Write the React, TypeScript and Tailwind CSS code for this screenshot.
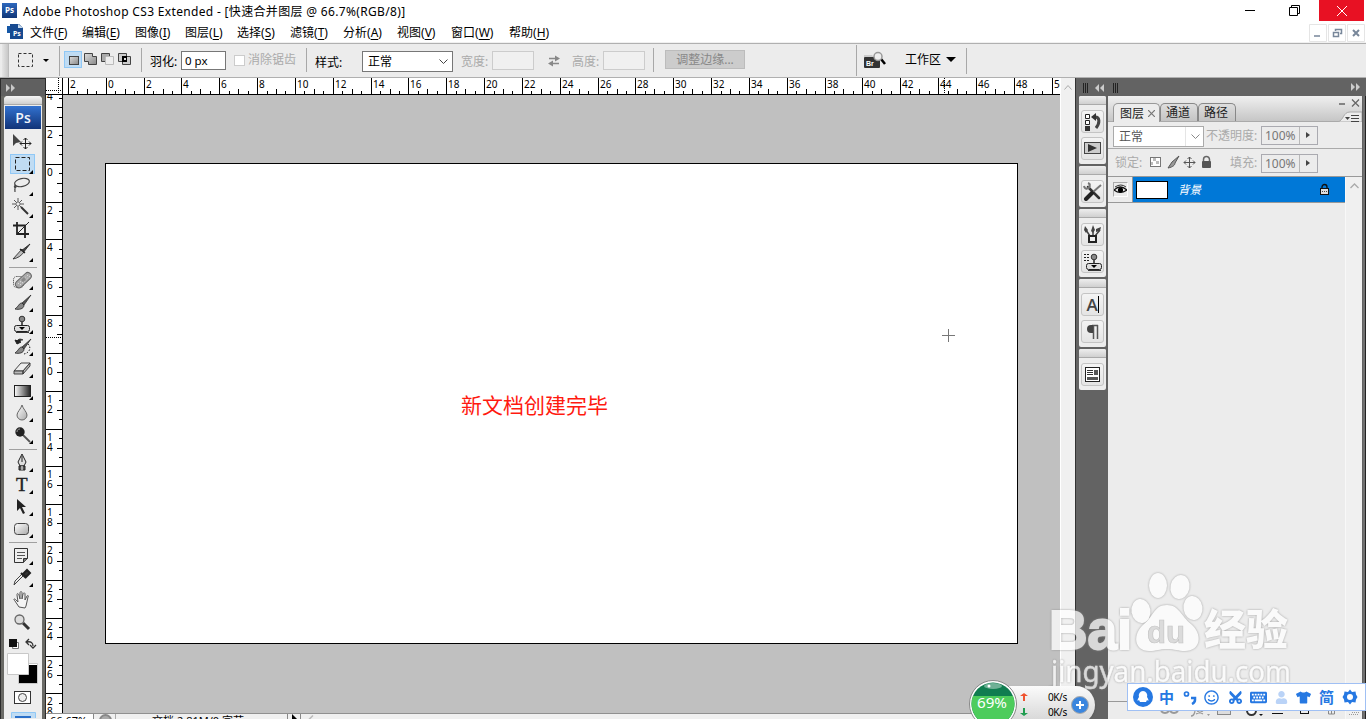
import { ReactNode } from "react";
import {
  FaKeyboard,
  FaRegSmile,
  FaTshirt,
  FaUser,
  FaCut,
} from "react-icons/fa";

const menus = [
  { name: "文件", hot: "F", w: "w-[52px]" },
  { name: "编辑", hot: "E", w: "w-[53px]" },
  { name: "图像", hot: "I", w: "w-[50px]" },
  { name: "图层", hot: "L", w: "w-[52px]" },
  { name: "选择", hot: "S", w: "w-[53px]" },
  { name: "滤镜", hot: "T", w: "w-[53px]" },
  { name: "分析", hot: "A", w: "w-[54px]" },
  { name: "视图", hot: "V", w: "w-[54px]" },
  { name: "窗口", hot: "W", w: "w-[58px]" },
  { name: "帮助", hot: "H", w: "w-[52px]" },
];

const STEP = 37.83;

const tickSize = (k: number) => {
  if (k % 4 === 0) return 16;
  return k % 2 === 0 ? 5 : 3;
};

const Icon = ({
  w = 24,
  h = 22,
  children,
}: {
  w?: number;
  h?: number;
  children: ReactNode;
}) => (
  <svg width={w} height={h} viewBox={`0 0 ${w} ${h}`} className="shrink-0">
    {children}
  </svg>
);

const Corner = () => <path d="M23 17v4h-4z" fill="#000" />;

const Brush = () => (
  <>
    <path d="M20 3L11 11l2 2z" fill="#555" stroke="#222" strokeWidth=".7" />
    <path d="M11 11c-3 0-3 3-7 6 4 1 9 0 9-4z" fill="#888" stroke="#222" strokeWidth=".8" />
  </>
);

const Stamp = () => (
  <>
    <circle cx="11" cy="5" r="2.8" fill="#888" stroke="#333" />
    <path d="M10 8h2v4h-2z" fill="#555" />
    <rect x="3.500" y="11.500" width="15" height="6" rx="2" fill="#ddd" stroke="#222" />
    <path d="M8 13h6l-3 3z" fill="#000" />
    <path d="M5 18.500h13" stroke="#333" />
  </>
);

const groupOne = [
  <path key="m" d="M3 3v12l3-3 5-1z" fill="#444" />,
  <rect key="r" x="5.500" y="4.500" width="14" height="13" fill="none" stroke="#222" strokeDasharray="4 2" />,
  <g key="l" fill="none" stroke="#444" strokeWidth="1.200">
    <ellipse cx="12" cy="7.500" rx="7.500" ry="4" transform="rotate(-12 12 7.500)" />
    <path d="M6 10c-3 1-1 4 0 2s-2 0-1 5" />
  </g>,
  <g key="w" stroke="#333">
    <path d="M8 1v12M2 7h12M4 3l8 8M12 3l-8 8" strokeWidth=".8" />
    <path d="M11 10l7 7" strokeWidth="2" />
    <circle cx="8" cy="7" r="2" fill="#eee" strokeWidth=".5" />
  </g>,
  <g key="c" fill="none" stroke="#222" strokeWidth="1.800">
    <path d="M7 3v12h12M3 6.500h12V19" />
    <path d="M8 14L19 3" strokeWidth="1" />
  </g>,
  <g key="s" stroke="#222" strokeWidth=".8">
    <path d="M20 3l-9 7 2 2z" fill="#444" />
    <path d="M12 8L3 18c5-1 8-3 11-7z" fill="#bbb" />
    <path d="M10 8l5 4" strokeWidth="1.500" />
  </g>,
];

const groupTwo = [
  <g key="h">
    <rect x="2.500" y="6.500" width="10" height="11" rx="3" fill="none" stroke="#333" strokeDasharray="1 1" />
    <rect x="3" y="7" width="19" height="7" rx="3.500" fill="#aaa" stroke="#666" transform="rotate(-43 12 10.500)" />
    <path d="M7 14l10-9M9 15l10-9" stroke="#eee" strokeDasharray="1 2" />
    <path d="M10 10l3-3 2 3-3 2z" fill="#888" />
  </g>,
  <Brush key="b" />,
  <Stamp key="s" />,
  <g key="y">
    <Brush />
    <path d="M12 4C8 2 6 4 6 6M4 4l2 4 4-2z" stroke="#222" fill="#222" />
    <path d="M17 8c4 4 1 9-4 10" fill="none" stroke="#222" strokeDasharray="1.500 1.500" />
  </g>,
  <g key="e" stroke="#333" strokeWidth=".9" fill="#eee">
    <path d="M3 13l7-8h9l-7 8z" />
    <path d="M3 13v3h9v-3zM12 16l7-8V5l-7 8z" fill="#bbb" />
  </g>,
  <rect key="g" x="3.500" y="5.500" width="16" height="11" fill="url(#bw)" stroke="#222" />,
  <path key="d" d="M11 3c1 4 5 7 5 10a5 5 0 0 1-10 0c0-3 4-6 5-10z" fill="url(#metal)" stroke="#666" />,
  <g key="o">
    <path d="M12 11l7 7" stroke="#555" strokeWidth="1.800" />
    <circle cx="9" cy="8" r="4.700" fill="#222" />
    <path d="M6 8c0-2 1-3 3-3" stroke="#999" fill="none" />
  </g>,
];

const groupThree = [
  <g key="p" stroke="#222" fill="#ddd">
    <path d="M11 2l4 8-2 4H9l-2-4z" />
    <path d="M11 4v6" />
    <path d="M8 14h6v4H8z" fill="#555" />
    <path d="M11 14v4" stroke="#fff" />
  </g>,
  <text key="t" x="5" y="17" fontSize="19" fill="#222" fontFamily="Liberation Serif, serif" stroke="#222" strokeWidth=".4">
    T
  </text>,
  <path key="a" d="M6 3v12l3-3 3 6 2-1-3-6h4z" fill="#222" />,
  <rect key="r" x="3.500" y="5.500" width="14" height="11" rx="3" fill="url(#metal)" stroke="#444" />,
];

const groupFour = [
  <g key="n">
    <path d="M3.500 3.500h13v10l-4 4h-9z" fill="#eee" stroke="#333" />
    <path d="M6 7.500h8M6 10.500h8M6 13.500h5" stroke="#555" />
    <path d="M12.500 17.500v-4h4" fill="#777" stroke="#333" />
  </g>,
  <g key="e">
    <path d="M12 9L5 16l-2 2 1-4 7-7z" fill="#eee" stroke="#444" />
    <path d="M10 6l5 5M12 7l4-4 3 3-4 4z" stroke="#222" strokeWidth="2" fill="#333" />
  </g>,
  <path
    key="h"
    d="M8 18l-4-6c-2-2-1-3 1-1l2 2-1-7c0-2 1-2 2 0l1 4V4c0-2 2-2 2 0v6l1-5c1-2 2-1 2 0v6l2-4c1-1 2 0 1 1l-2 9-1 2z"
    fill="#f4f4f4"
    stroke="#555"
  />,
  <g key="z">
    <path d="M12 12l6 6" stroke="#333" strokeWidth="3" />
    <circle cx="8.500" cy="8.500" r="4.500" fill="#ddd" stroke="#666" strokeWidth="1.300" />
  </g>,
];

const ToolGroup = ({ tools, plain = [] }: { tools: ReactNode[]; plain?: number[] }) => (
  <div className="flex flex-col">
    {tools.map((tool, i) => (
      <div key={i} className="flex h-[22px] pl-[6px]">
        <Icon w={26}>
          {tools === groupOne && i === 1 && (
            <rect x=".5" y="1.500" width="24" height="19" fill="#c0dcf3" stroke="#90c8f6" />
          )}
          <g transform={tools === groupOne ? undefined : "translate(1 1)"}>{tool}</g>
          {tools === groupOne && i === 0 && (
            <path d="M10 12.500h11M15.500 7v11M13.500 9l2-2 2 2M13.500 16l2 2 2-2M12 10.500l-2 2 2 2M19 10.500l2 2-2 2" fill="none" stroke="#222" />
          )}
          {!plain.includes(i) && <Corner />}
        </Icon>
      </div>
    ))}
  </div>
);

const Toolbox = () => (
  <div className="flex w-[46px] shrink-0 flex-col border-l border-r border-l-[#2b2b2b] border-r-[#2b2b2b] bg-[#6a6a66]">
    <div className="h-[18px] border-t border-[#2b2b2b] bg-[#606060] pl-1 pt-[5px]">
      <Icon w={12} h={8}>
        <path d="M1 0l4 4-4 4zM6 0l4 4-4 4z" fill="#c8c8c8" />
      </Icon>
    </div>
    <div className="ml-[3px] flex w-[38px] flex-1 flex-col rounded-t-sm bg-[#ededed]">
      <div className="h-[9px] rounded-t-sm border-b border-[#aaa] bg-linear-to-b from-[#f5f5f5] to-[#cfcfcf]" />
      <div className="mx-px mt-px mb-[2px] flex h-[23px] items-center justify-center bg-linear-to-b from-[#3272d0] to-[#123478] text-[14px] font-semibold leading-none text-[#f0f4fa] font-['Open_Sans',sans-serif]">
        Ps
      </div>
      <ToolGroup tools={groupOne} plain={[0, 4]} />
      <div className="mx-[5px] mt-1 mb-[1px] h-px bg-[#a0a0a0]" />
      <ToolGroup tools={groupTwo} />
      <div className="mx-[5px] mt-1 mb-[1px] h-px bg-[#a0a0a0]" />
      <ToolGroup tools={groupThree} />
      <div className="mx-[5px] mt-[3px] mb-[1px] h-px bg-[#a0a0a0]" />
      <ToolGroup tools={groupFour} plain={[2, 3]} />
      <Icon w={38} h={86}>
        <path d="M9.500 10.500h5v6h-6z" fill="#fff" stroke="#777" />
        <path d="M5 7h8v8H5z" fill="#111" />
        <path d="M23 10c4-1 6 1 6 4M25 7l-3 3 3 3M26 13l3 3 3-3" fill="none" stroke="#333" strokeWidth="1.300" />
        <path d="M14.500 31.500h19v20h-19z" fill="#fff" stroke="#c8c8c8" />
        <path d="M15 33h18v18H15z" fill="#000" />
        <path d="M3.500 21.500h21v21h-21z" fill="#fff" stroke="#c8c8c8" />
        <rect x="10.500" y="59.500" width="16" height="12" fill="#fff" stroke="#333" />
        <circle cx="18.500" cy="65.500" r="4" fill="#eee" stroke="#444" />
        <path d="M7.500 80.500h24v8h-24z" fill="#c0dcf3" stroke="#90c8f6" />
        <path d="M11 84h16v4H11z" fill="#2a6fc8" />
      </Icon>
    </div>
  </div>
);

const TopRuler = () => (
  <svg width="1014" height="17" className="block font-['Noto_Sans',sans-serif]" shapeRendering="crispEdges">
    <rect width="1014" height="17" fill="#fff" />
    <path d="M12.500 0v16M0 12.500h17" stroke="#000" strokeDasharray="1 1" />
    {Array.from({ length: 105 }, (_, i) => i - 4).map((k) => (
      <rect
        key={k}
        x={Math.floor(60.3 + (k * STEP) / 4)}
        y={16 - tickSize(k)}
        width="1"
        height={tickSize(k)}
      />
    ))}
    {Array.from({ length: 27 }, (_, i) => i - 1).map((n) => (
      <text key={n} x={Math.floor(60.3 + n * STEP) + 2} y="10" fontSize="10">
        {Math.abs(n * 2)}
      </text>
    ))}
    <rect x="0" y="16" width="1014" height="1" />
    <rect x="16" y="0" width="1" height="16" />
    <path d="M898.500 0v16" stroke="#000" strokeDasharray="1 1" />
  </svg>
);

const LeftRuler = () => (
  <svg width="17" height="618" className="block shrink-0 font-['Noto_Sans',sans-serif]" shapeRendering="crispEdges">
    <rect width="17" height="618" fill="#fff" />
    {Array.from({ length: 65 }, (_, i) => i - 7).map((k) => (
      <rect
        key={k}
        x={16 - tickSize(k)}
        y={Math.floor(69.3 + (k * STEP) / 4)}
        width={tickSize(k)}
        height="1"
      />
    ))}
    {Array.from({ length: 17 }, (_, i) => i - 2).map((n) =>
      String(Math.abs(n * 2))
        .split("")
        .map((digit, j) => (
          <text key={`${n}-${j}`} x="1" y={Math.floor(69.3 + n * STEP) + 12 + j * 10} fontSize="10">
            {digit}
          </text>
        ))
    )}
    <path d="M0 242.500h16" stroke="#000" strokeDasharray="1 1" />
    <rect x="16" width="1" height="618" />
  </svg>
);

const Canvas = () => (
  <div className="flex w-[1014px] shrink-0 flex-col overflow-hidden bg-[#c0c0c0]">
    <TopRuler />
    <div className="flex h-[618px]">
      <LeftRuler />
      <div className="pl-[42px] pt-[68px]">
        <div className="relative h-[481px] w-[913px] border border-black bg-white">
          <div className="pl-[355px] pt-[225px] text-[21px] leading-[30px] text-[#ff1a10] font-['Noto_Sans_CJK_SC',sans-serif]">
            新文档创建完毕
          </div>
          <svg width="13" height="13" className="absolute left-[836px] top-[165px]">
            <path d="M6.500 0v13M0 6.500h13" stroke="#777" />
          </svg>
        </div>
      </div>
    </div>
    <div className="flex h-[6px] shrink-0 overflow-hidden border-t border-[#909090] bg-[#f0f0f0] text-[11px] leading-[14px] text-black font-['Noto_Sans','Noto_Sans_CJK_SC',sans-serif]">
      <div className="w-[48px] border-r border-[#888] bg-white pl-1">66.67%</div>
      <div className="w-[22px] border-r border-[#aaa] pl-[5px]">
        <div className="h-[13px] w-[13px] rounded-full border-2 border-[#888] bg-[#aaa]" />
      </div>
      <div className="w-[171px] pl-[36px] whitespace-nowrap">文档:2.81M/0 字节</div>
      <div className="w-[14px] border-x border-[#888] pl-1">
        <svg width="6" height="8">
          <path d="M0 0l5 5-5 3z" />
        </svg>
      </div>
      <svg width="6" height="9" className="ml-[7px] mt-px">
        <path d="M5 .5l-4 4 4 4" fill="none" stroke="#bbb" strokeWidth="1.500" />
      </svg>
    </div>
  </div>
);

const OptionsBar = () => (
  <div className="flex h-[35px] w-[1366px] items-start border-t border-b border-[#b0b0b0] bg-[#ececec] text-[12px] leading-[17px] text-black font-['Noto_Sans','Noto_Sans_CJK_SC',sans-serif]">
    <div className="ml-[2px] h-full w-[7px] border-r border-[#bbb] bg-linear-to-r from-[#e5e5e5] to-[#c8c8c8]" />
    <div className="ml-[9px] flex w-[41px] pt-[9px]">
      <svg width="32" height="16">
        <rect x=".5" y=".5" width="14" height="13" fill="none" stroke="#333" strokeDasharray="3 2" />
        <path d="M25 6h6l-3 3z" />
      </svg>
    </div>
    <div className="mt-[2px] h-[30px] w-px bg-[#a8a8a8]" />
    <svg width="68" height="18" className="ml-[4px] mt-[7px]">
      <rect x=".5" y=".5" width="17" height="16" fill="#c0dcf3" stroke="#90c8f6" />
      <rect x="5.500" y="5.500" width="9" height="8" fill="url(#grayBox)" stroke="#444" />
      <path d="M20.500 2.500h8v3h4v8h-8v-3h-4z" fill="url(#grayBox)" stroke="#444" />
      <path d="M37.500 2.500h8v3h-4v5h-4z" fill="#aaa" stroke="#444" />
      <path d="M41.500 5.500h8v8h-8z" fill="#eee" stroke="#bbb" />
      <path d="M54.500 2.500h8v8h-8zM58.500 5.500h8v8h-8z" fill="#ccc" stroke="#444" />
      <path d="M58 5h5v6h-5z" fill="#000" />
      <path d="M60 7h2v2h-2z" fill="#ddd" />
    </svg>
    <div className="ml-[9px] mt-1 h-[24px] w-px bg-[#a8a8a8]" />
    <div className="ml-[8px] mt-[9px] w-[31px] whitespace-nowrap">羽化:</div>
    <div className="mt-[7px] h-[19px] w-[45px] border border-[#777] bg-white pl-[3px] text-[11.500px]">0 px</div>
    <div className="ml-[8px] mt-[11px] h-[11px] w-[11px] border border-[#ccc] bg-white" />
    <div className="ml-[3px] mt-[7px] w-[58px] text-[#aaa]">消除锯齿</div>
    <div className="mt-1 h-[24px] w-px bg-[#a8a8a8]" />
    <div className="ml-[8px] mt-[10px] w-[47px] whitespace-nowrap">样式:</div>
    <div className="mt-[7px] flex h-[21px] w-[91px] items-center justify-between border border-[#777] bg-white pl-[5px] pr-1">
      <span>正常</span>
      <svg width="9" height="6">
        <path d="M.5.5l4 4 4-4" fill="none" stroke="#444" />
      </svg>
    </div>
    <div className="ml-[8px] mt-[9px] w-[31px] whitespace-nowrap text-[#aaa]">宽度:</div>
    <div className="mt-[7px] h-[19px] w-[42px] border border-[#ccc] bg-[#f0f0f0]" />
    <svg width="12" height="12" className="ml-[14px] mt-[11px]">
      <path d="M1 3.500h7M11 8.500H4" stroke="#888" strokeWidth="1.300" />
      <path d="M7 .5l5 3-5 3zM5 5.500l-5 3 5 3z" fill="#888" />
    </svg>
    <div className="ml-[12px] mt-[9px] w-[31px] whitespace-nowrap text-[#aaa]">高度:</div>
    <div className="mt-[7px] h-[19px] w-[42px] border border-[#ccc] bg-[#f0f0f0]" />
    <div className="ml-[8px] mt-1 h-[24px] w-px bg-[#a8a8a8]" />
    <div className="ml-[11px] mt-[6px] h-[19px] w-[80px] border border-[#bcbcbc] bg-[#cccccc] text-center text-[#888]">
      调整边缘...
    </div>
    <div className="ml-[111px] mt-[1px] h-[31px] w-px bg-[#a8a8a8]" />
    <svg width="24" height="19" className="ml-[6px] mt-[7px] font-['Liberation_Sans',sans-serif]">
      <path d="M1 4h8l2 2h5v3H1z" fill="#ccc" />
      <rect x="1" y="6" width="16" height="11" rx="1" fill="#333" />
      <text x="3" y="15" fontSize="7" fontWeight="bold" fill="#fff">
        Br
      </text>
      <path d="M18 8l4 5" stroke="#000" strokeWidth="2.500" />
      <circle cx="15" cy="5.500" r="4" fill="#eee" stroke="#999" strokeWidth="1.500" />
    </svg>
    <div className="ml-[18px] mt-[7px] w-[41px]">工作区</div>
    <svg width="10" height="6" className="mt-[13px]">
      <path d="M0 0h10L5 5z" />
    </svg>
    <div className="ml-[10px] mt-1 h-[26px] w-px bg-[#a8a8a8]" />
  </div>
);

const DockButton = ({ children }: { children: ReactNode }) => (
  <div className="ml-[2px] flex h-[23px] w-[23px] items-center justify-center rounded-[3px] border border-[#c4c4c4] bg-linear-to-b from-[#f4f4f4] to-[#e4e4e4]">
    {children}
  </div>
);

const DockGroup = ({ children }: { children: ReactNode }) => (
  <div className="w-[27px] overflow-hidden rounded-[2px] bg-[#ededed] pb-1">
    <div className="mb-[5px] h-[9px] border-b border-[#aaa] bg-linear-to-b from-[#eee] to-[#d0d0d0]" />
    <div className="flex flex-col gap-[4px]">{children}</div>
  </div>
);

const Dock = () => (
  <div className="flex w-[32px] shrink-0 flex-col border-l border-[#333] bg-[#636363] pl-[3px]">
    <div className="flex h-[18px] items-start pt-[5px]">
      <svg width="24" height="10" className="ml-[4px]">
        <path d="M.5 0v10M2.500 0v10M4.500 0v10" stroke="#222" />
        <path d="M16 1l-4 4 4 4zM21 1l-4 4 4 4z" fill="#ccc" />
      </svg>
    </div>
    <div className="flex flex-col gap-[2px]">
      <DockGroup>
        <DockButton>
          <Icon w={19} h={20}>
            <path d="M2.500 2.500h4v4h-4zM2.500 8.500h4v4h-4z" fill="#fff" stroke="#222" />
            <path d="M2 14h5v5H2z" fill="#333" />
            <path d="M12 5c5 0 5 6 1 11" fill="none" stroke="#444" strokeWidth="3" />
            <path d="M8 5l5-4v8z" fill="#333" />
          </Icon>
        </DockButton>
        <DockButton>
          <Icon w={17} h={15}>
            <rect x=".5" y="1.500" width="16" height="11" fill="#ccc" stroke="#444" />
            <path d="M4 3v8l9-4z" fill="#333" />
          </Icon>
        </DockButton>
      </DockGroup>
      <DockGroup>
        <DockButton>
          <Icon w={19} h={19}>
            <path d="M5 5l11 11" stroke="#333" strokeWidth="2.500" strokeLinecap="round" />
            <path d="M1 4c1 4 5 3 6 0M5 1c3 1 2 5-2 6" fill="none" stroke="#777" strokeWidth="2" />
            <path d="M18 3l-8 7" stroke="#777" strokeWidth="2" />
            <path d="M9 11l-6 6" stroke="#222" strokeWidth="4" strokeLinecap="round" />
          </Icon>
        </DockButton>
      </DockGroup>
      <DockGroup>
        <DockButton>
          <Icon w={19} h={19}>
            <path d="M7 11L3 5M10 11V5M12 11l5-6" stroke="#444" strokeWidth="1.500" />
            <path d="M2 1l3 4-2 3-2-3zM10 0l2 5-2 3-2-2zM13 4l5-2-1 4-4 1z" fill="#444" />
            <rect x="6" y="11" width="7" height="6" fill="#eee" stroke="#222" strokeWidth="2" />
          </Icon>
        </DockButton>
        <DockButton>
          <Icon w={19} h={20}>
            <path d="M1 2.500h5M1 5.500h5M1 8.500h5" stroke="#222" strokeDasharray="2 1" />
            <Stamp />
          </Icon>
        </DockButton>
      </DockGroup>
      <DockGroup>
        <DockButton>
          <span className="border-r border-black text-[17px] font-semibold leading-[17px] text-[#444] font-['Open_Sans',sans-serif]">
            A
          </span>
        </DockButton>
        <DockButton>
          <Icon w={18} h={18}>
            <path d="M9.500 2v14M13.500 2v14M8 2.500h6" fill="none" stroke="#555" strokeWidth="1.500" />
            <path d="M9 2H7a4 4 0 0 0 0 8h2z" fill="#444" />
          </Icon>
        </DockButton>
      </DockGroup>
      <DockGroup>
        <DockButton>
          <Icon w={17} h={18}>
            <rect x="1.500" y="1.500" width="14" height="14" fill="#fff" stroke="#222" />
            <path d="M3 4.500h6M3 6.500h6M3 8.500h6" stroke="#333" />
            <path d="M10 4h4v5h-4zM3 11h11v3H3z" fill="#555" />
          </Icon>
        </DockButton>
      </DockGroup>
    </div>
  </div>
);

const Percent = () => (
  <div className="flex h-[19px] w-[57px] border border-[#aaaab0] bg-[#ececec] text-[12px] leading-[17px] text-[#777]">
    <div className="w-[39px] border-r border-[#b8b8b8] pl-[3px]">100%</div>
    <svg width="17" height="17">
      <path d="M6 5l4 3-4 3z" fill="#444" />
    </svg>
  </div>
);

const LayersPanel = () => (
  <div className="flex flex-1 flex-col bg-[#636363]">
    <div className="flex h-[18px] shrink-0 justify-between pt-[5px] pr-[5px] pl-[6px]">
      <svg width="6" height="10">
        <path d="M.5 0v10M2.500 0v10M4.500 0v10" stroke="#222" />
      </svg>
      <svg width="10" height="8">
        <path d="M0 0l4 4-4 4zM5 0l4 4-4 4z" fill="#ccc" />
      </svg>
    </div>
    <div className="flex min-h-0 flex-1">
      <div className="ml-[1px] flex w-[254px] flex-col bg-[#ececec] text-[12px] text-[#222] font-['Noto_Sans','Noto_Sans_CJK_SC',sans-serif]">
        <div className="relative flex h-[26px] shrink-0 items-end rounded-t-sm border-b border-[#aaa] bg-linear-to-b from-[#f0f0f0] to-[#c6c6c6] pl-[5px] leading-[17px]">
          <div className="-mb-px flex h-[19px] w-[47px] items-center rounded-t-[5px] border border-b-0 border-[#999] bg-[#ececec] pl-[6px]">
            图层
            <svg width="7" height="7" className="ml-[4px]">
              <path d="M0 0l7 7M7 0L0 7" stroke="#777" strokeWidth="1.200" />
            </svg>
          </div>
          <div className="flex h-[18px] w-[38px] items-center rounded-t-[5px] border border-b-0 border-[#888] bg-linear-to-b from-[#dedede] to-[#c4c4c4] pl-[5px]">通道</div>
          <div className="flex h-[18px] w-[38px] items-center rounded-t-[5px] border border-b-0 border-[#888] bg-linear-to-b from-[#dedede] to-[#c4c4c4] pl-[5px]">路径</div>
          <svg width="24" height="26" className="absolute right-0 top-0">
            <path d="M1 7.500h6M14 3l7 7M21 3l-7 7" transform="translate(0 .5)" stroke="#666" strokeWidth="1.300" />
            <path d="M0 26C6 24 5 16 12 16h12v10z" fill="#ececec" stroke="#aaa" />
            <path d="M7 21h5l-2.500 3z" fill="#444" />
            <path d="M13 19.500h8M13 22.500h8M13 25.500h8" stroke="#444" />
          </svg>
        </div>
        <div className="flex h-[27px] shrink-0 items-start border-b border-[#aaa] pl-[5px] pt-[4px] leading-[18px] text-[#aaa]">
          <div className="flex h-[21px] w-[91px] items-center border border-[#aaa] bg-white text-[#555]">
            <div className="w-[72px] border-r border-[#e5e5e5] pt-px pl-[5px]">正常</div>
            <svg width="9" height="6" className="ml-[5px]">
              <path d="M.5.5l4 4 4-4" fill="none" stroke="#888" />
            </svg>
          </div>
          <div className="ml-[2px] w-[55px] whitespace-nowrap pt-px">不透明度:</div>
          <Percent />
        </div>
        <div className="flex h-[28px] shrink-0 items-start border-b border-[#999] pl-[7px] pt-[5px] leading-[18px] text-[#aaa]">
          <div className="w-[34px] whitespace-nowrap">锁定:</div>
          <svg width="66" height="16" className="mr-[15px]">
            <rect x="1.500" y="3.500" width="10" height="9" fill="#fff" stroke="#777" />
            <path d="M4 4h3v3H4zM7 7h3v3H7zM2 8h2v3H2z" fill="#bbb" />
            <path d="M30 2l-7 6-4 6c5-1 7-3 7-5z" fill="#999" stroke="#555" />
            <path d="M35 8.500h11M40.500 3v11M38.500 5l2-2 2 2M38.500 12l2 2 2-2M37 6.500l-2 2 2 2M44 6.500l2 2-2 2" fill="none" stroke="#555" />
            <path d="M54.500 8V5.500a3 3 0 0 1 6 0V8" fill="none" stroke="#666" strokeWidth="1.500" />
            <rect x="53" y="7" width="9" height="7" rx="1" fill="#555" />
          </svg>
          <div className="w-[31px] whitespace-nowrap">填充:</div>
          <Percent />
        </div>
        <div className="flex min-h-0 flex-1">
          <div className="flex w-[237px] flex-col">
            <div className="flex h-[26px] shrink-0 border-b border-[#999]">
              <div className="flex w-[25px] items-center justify-center border-r border-[#999]">
                <svg width="15" height="15" className="border border-t-[#aaa] border-l-[#aaa] border-r-white border-b-white">
                  <path d="M0 7q6-6 13 0-7 5-13 0z" fill="#eee" stroke="#111" strokeWidth="1.200" />
                  <circle cx="6.500" cy="7" r="2.600" />
                  <path d="M1 4q6-4 11 0" stroke="#333" fill="none" />
                </svg>
              </div>
              <div className="flex flex-1 items-center bg-[#0078d7] text-white">
                <div className="ml-[3px] h-[18px] w-[32px] border border-black bg-white" />
                <span className="ml-[10px] text-[11.500px] italic">背景</span>
                <svg width="11" height="13" className="ml-auto mr-[15px]">
                  <path d="M3 6V4a2.500 2.500 0 0 1 5 0v2" fill="none" stroke="#111" strokeWidth="1.300" />
                  <rect x="1.500" y="5.500" width="8" height="6" fill="#ddd" stroke="#111" />
                  <path d="M3 8.500h5" stroke="#444" strokeDasharray="1 1" />
                </svg>
              </div>
            </div>
            <div className="mt-[498px] h-px shrink-0 bg-[#999]" />
            <svg width="237" height="8" className="mt-[9px] shrink-0">
              <path d="M53 0q4 4 8 0M62 0q4 4 8 0" fill="none" stroke="#999" strokeWidth="2" />
              <path d="M83 5q3 0 4-5M89 0l6 3M95 0l-7 3" fill="none" stroke="#999" strokeWidth="1.300" />
              <path d="M99 3h3l-1.500 2z" fill="#999" />
              <rect x="109.500" y="-5.500" width="13" height="9" fill="#ddd" stroke="#888" />
              <circle cx="143.500" cy="-.5" r="4.500" fill="#fff" stroke="#333" strokeWidth="2" />
              <path d="M151 3h4l-2 2z" fill="#111" />
              <path d="M164 2.500h11M192 2.500h9M192.500 0v3M200.500 0v3" stroke="#111" />
              <path d="M220.500-4h6v7h-6zM223.500 0v3" fill="none" stroke="#888" />
            </svg>
          </div>
          <div className="flex flex-1 flex-col items-center justify-between border-l border-[#f8f8f8] bg-[#f0f0f0] pt-[6px] pb-[3px]">
            <svg width="9" height="6">
              <path d="M.5 5l4-4 4 4" fill="none" stroke="#aaa" strokeWidth="1.300" />
            </svg>
            <svg width="10" height="6">
              <path d="M5 .5h5M3 2.500h7M0 4.500h10" stroke="#999" strokeDasharray="1 1" />
            </svg>
          </div>
        </div>
      </div>
      <div className="ml-[1px] w-[3px] border-r border-[#222] bg-[#707070]" />
    </div>
  </div>
);

const Watermark = () => (
  <svg
    width="250"
    height="125"
    className="absolute left-[1046px] top-[568px] opacity-75 drop-shadow-[0_0_1px_#888888]"
    fill="#fff"
  >
    <text x="3" y="81" fontSize="55" fontWeight="bold" fontFamily="Liberation Sans, sans-serif" stroke="#fff" strokeWidth="2" textLength="83" lengthAdjust="spacingAndGlyphs">
      Bai
    </text>
    <ellipse cx="95" cy="43" rx="9.500" ry="12" transform="rotate(-8 95 43)" />
    <ellipse cx="112" cy="17.500" rx="9" ry="12.500" />
    <ellipse cx="134" cy="19" rx="9.500" ry="12" transform="rotate(12 134 19)" />
    <ellipse cx="147" cy="40" rx="9.500" ry="12" transform="rotate(-8 147 40)" />
    <path d="M121 37c-13 0-13 11-23 19-12 10-10 27 5 27 8 0 10-2 18-2s11 2 18 2c16 0 18-17 6-27-10-8-12-19-24-19z" />
    <text x="101" y="75" fontSize="31" fontWeight="bold" fontFamily="Liberation Sans, sans-serif" fill="#d6d6d6" stroke="#b8b8b8" strokeWidth=".7" textLength="38" lengthAdjust="spacingAndGlyphs">
      du
    </text>
    <text x="158" y="77" fontSize="42" fontWeight="900" fontFamily="Noto Sans CJK SC, sans-serif" textLength="84" lengthAdjust="spacingAndGlyphs">
      经验
    </text>
    <text x="5" y="114" fontSize="29" fontFamily="Noto Sans, sans-serif" stroke="#fff" strokeWidth=".4" textLength="240" lengthAdjust="spacingAndGlyphs">
      jingyan.baidu.com
    </text>
  </svg>
);

const SpeedBall = () => (
  <div className="absolute left-[968px] top-[679px] h-[40px] w-[130px] overflow-hidden">
    <div className="absolute left-[30px] top-[7px] flex h-[38px] w-[97px] rounded-r-[19px] bg-linear-to-b from-[#fbfbfb] to-[#d4d4d4] text-[10px] leading-[15px] text-black shadow font-['Noto_Sans',sans-serif]">
      <svg width="8" height="30" className="ml-[22px] mt-[7px]">
        <path d="M3 8V3H0l4-3 4 3H5v5z" fill="#f0532f" />
        <path d="M3 15v5H0l4 3 4-3H5v-5z" fill="#1f9d50" />
      </svg>
      <div className="ml-[20px] w-[23px] pt-[4px] whitespace-nowrap tracking-[-0.4px]">
        <div>0K/s</div>
        <div>0K/s</div>
      </div>
      <svg width="18" height="18" className="mt-[10px]">
        <circle cx="9" cy="9" r="8.500" fill="#3b86de" stroke="#aaa" />
        <path d="M9 5v8M5 9h8" stroke="#fff" strokeWidth="2" />
      </svg>
    </div>
    <svg width="50" height="50" className="absolute left-0 top-0 font-['Noto_Sans',sans-serif]">
      <circle cx="25" cy="25" r="23.500" fill="#fff" stroke="#888" />
      <circle cx="25" cy="25" r="21.500" fill="#107d50" />
      <path d="M5 17h40a21.500 21.500 0 1 1-40 0z" fill="#4dcc5c" />
      <ellipse cx="25" cy="7" rx="9" ry="3" fill="#fff" opacity=".4" />
      <circle cx="21" cy="7" r="1.500" fill="#fff" />
      <text x="9" y="29" fontSize="13.500" fill="#fff" textLength="30" lengthAdjust="spacingAndGlyphs">
        69%
      </text>
    </svg>
  </div>
);

const ImeBar = () => (
  <div className="absolute left-[1127px] top-[683px] flex h-[28px] w-[239px] items-center border border-[#a0c0f4] bg-white pl-[5px] text-[#2678e2] font-['Noto_Sans_CJK_SC',sans-serif]">
    <svg width="20" height="20" className="mr-[6px]">
      <circle cx="10" cy="10" r="10" fill="currentColor" />
      <path d="M10 4a4.500 4.500 0 0 0-4 6c-2 3-2 5 0 3l1 2h6l1-2c2 2 2 0 0-3a4.500 4.500 0 0 0-4-6z" fill="#fff" />
    </svg>
    <span className="-mt-[2px] w-[24px] text-[15px] font-bold leading-none">中</span>
    <svg width="14" height="16" className="mr-[7px]">
      <circle cx="3.500" cy="5" r="2" fill="none" stroke="currentColor" strokeWidth="1.700" />
      <path d="M8 9h4v2c0 2-1 3-3 4" fill="none" stroke="currentColor" strokeWidth="2.500" />
    </svg>
    <FaRegSmile size={15} className="mr-[9px]" />
    <FaCut size={15} className="mr-[7px] -rotate-90" />
    <FaKeyboard size={17} className="mr-[8px]" />
    <FaUser size={13} className="mr-[8px] text-[#bad3f7]" />
    <FaTshirt size={15} className="mr-[8px]" />
    <span className="-mt-[2px] w-[23px] text-[15px] font-bold leading-none">简</span>
    <svg width="16" height="16">
      <path d="M8 .5l2 2.500 3.500-.5.500 3L15.500 8 14 10.500l-.5 3-3.500-.5-2 2.500L6 13l-3.500.5-.5-3L.5 8 2 5.500l.5-3L6 3z" fill="currentColor" />
      <circle cx="8" cy="8" r="3" fill="#fff" />
    </svg>
  </div>
);

export default function App() {
  return (
    <div className="relative flex h-[719px] w-[1366px] flex-col overflow-hidden bg-white">
      <svg width="0" height="0" className="absolute">
        <linearGradient id="bw">
          <stop stopColor="#fff" />
          <stop offset="1" stopColor="#222" />
        </linearGradient>
        <linearGradient id="metal" x2="1" y2="1">
          <stop stopColor="#fff" />
          <stop offset="1" stopColor="#aaa" />
        </linearGradient>
        <linearGradient id="grayBox" x2="1" y2="1">
          <stop stopColor="#ddd" />
          <stop offset="1" stopColor="#888" />
        </linearGradient>
      </svg>
      <div className="flex h-[23px] shrink-0 items-start justify-between text-black font-['Noto_Sans','Noto_Sans_CJK_SC',sans-serif]">
        <div className="flex pl-[2px] pt-[3px]">
          <div className="flex h-[15px] w-[15px] justify-center bg-linear-to-b from-[#2e68bd] to-[#103678] text-[8px] font-bold leading-[14px] text-white">
            Ps
          </div>
          <span className="ml-[6px] whitespace-nowrap text-[12px] leading-[18px] tracking-[0.330px]">
            Adobe Photoshop CS3 Extended - [快速合并图层 @ 66.7%(RGB/8)]
          </span>
        </div>
        <div className="flex">
          <svg width="74" height="21">
            <path d="M0 10.500h10M44.500 7.500h8v8h-8zM46.500 7v-1.500h8v8h-2" fill="none" stroke="#000" />
          </svg>
          <div className="mr-[2px] flex h-[21px] w-[45px] items-center justify-center bg-[#e81123]">
            <svg width="10" height="10">
              <path d="M0 0l10 10M10 0L0 10" stroke="#fff" />
            </svg>
          </div>
        </div>
      </div>
      <div className="flex h-[20px] shrink-0 justify-between border-b border-[#f0f0f0] text-[12px] leading-[19px] text-black font-['Noto_Sans','Noto_Sans_CJK_SC',sans-serif]">
        <div className="flex">
          <svg width="22" height="17" className="ml-[6px] mr-[2px] font-['Noto_Sans',sans-serif]">
            <path d="M1 3h14v7H1z" fill="#1557a6" />
            <path d="M4 1h9l4 4v11H4z" fill="#174a90" />
            <path d="M12 1l5 4h-5z" fill="#cde" />
            <text x="7" y="13" fontSize="7" fontWeight="bold" fill="#fff">
              Ps
            </text>
          </svg>
          {menus.map((menu) => (
            <div key={menu.name} className={`${menu.w} whitespace-nowrap`}>
              {menu.name}(<span className="underline underline-offset-2">{menu.hot}</span>)
            </div>
          ))}
        </div>
        <svg width="56" height="18" className="mr-px mt-px" fill="none">
          <path d="M.5.500h17v17H.5zM19.500.500h17v17h-17zM38.500.500h17v17h-17z" stroke="#e5e5e5" />
          <path d="M5 12h6M24.500 8.500h5v4h-5zM26.500 7V5.500h6v4H31" stroke="#78879a" strokeWidth="1.500" />
          <path d="M44 6l6 6M50 6l-6 6" stroke="#78879a" strokeWidth="2" />
        </svg>
      </div>
      <OptionsBar />
      <div className="flex h-[641px] shrink-0">
        <Toolbox />
        <Canvas />
        <div className="flex w-[15px] shrink-0 justify-center border-l border-white bg-[#f0f0f0] pt-[7px]">
          <svg width="8" height="5">
            <path d="M.5 4.500l3.500-4 3.500 4" fill="none" stroke="#aaa" />
          </svg>
        </div>
        <Dock />
        <LayersPanel />
      </div>
      <Watermark />
      <SpeedBall />
      <ImeBar />
    </div>
  );
}
